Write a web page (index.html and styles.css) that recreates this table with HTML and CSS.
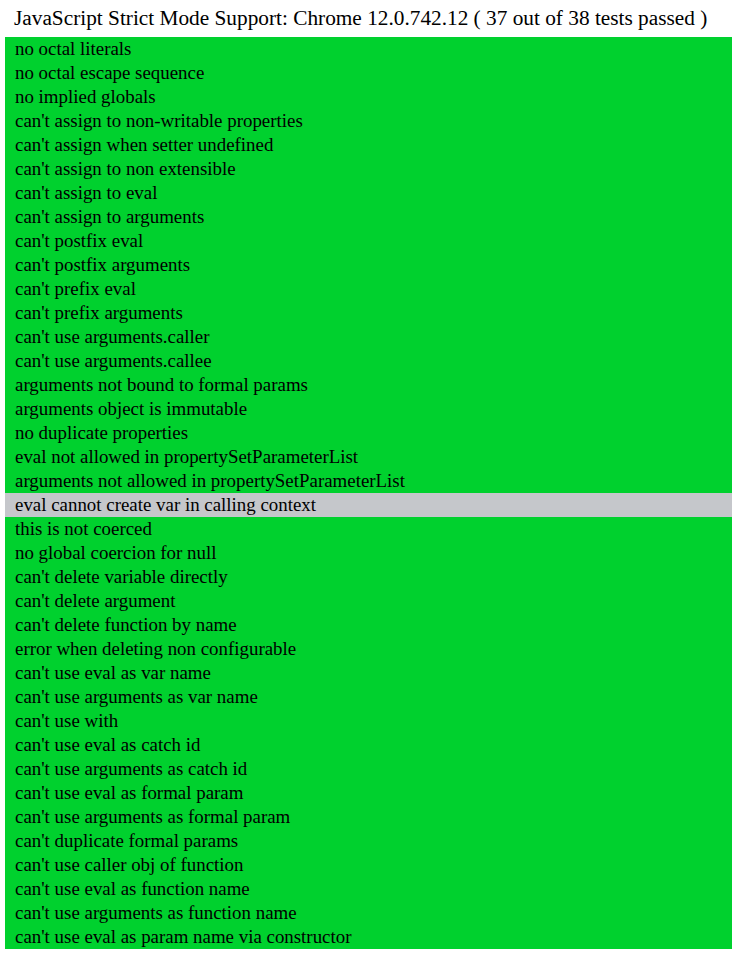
FILE: index.html
```html
<!DOCTYPE html>
<html>
<head>
<meta charset="utf-8">
<link rel="stylesheet" href="styles.css">
</head>
<body>
<h1 class="title">JavaScript Strict Mode Support: Chrome 12.0.742.12 ( 37 out of 38 tests passed )</h1>
<ul class="tests">
<li class="pass">no octal literals</li>
<li class="pass">no octal escape sequence</li>
<li class="pass">no implied globals</li>
<li class="pass">can't assign to non-writable properties</li>
<li class="pass">can't assign when setter undefined</li>
<li class="pass">can't assign to non extensible</li>
<li class="pass">can't assign to eval</li>
<li class="pass">can't assign to arguments</li>
<li class="pass">can't postfix eval</li>
<li class="pass">can't postfix arguments</li>
<li class="pass">can't prefix eval</li>
<li class="pass">can't prefix arguments</li>
<li class="pass">can't use arguments.caller</li>
<li class="pass">can't use arguments.callee</li>
<li class="pass">arguments not bound to formal params</li>
<li class="pass">arguments object is immutable</li>
<li class="pass">no duplicate properties</li>
<li class="pass">eval not allowed in propertySetParameterList</li>
<li class="pass">arguments not allowed in propertySetParameterList</li>
<li class="fail">eval cannot create var in calling context</li>
<li class="pass">this is not coerced</li>
<li class="pass">no global coercion for null</li>
<li class="pass">can't delete variable directly</li>
<li class="pass">can't delete argument</li>
<li class="pass">can't delete function by name</li>
<li class="pass">error when deleting non configurable</li>
<li class="pass">can't use eval as var name</li>
<li class="pass">can't use arguments as var name</li>
<li class="pass">can't use with</li>
<li class="pass">can't use eval as catch id</li>
<li class="pass">can't use arguments as catch id</li>
<li class="pass">can't use eval as formal param</li>
<li class="pass">can't use arguments as formal param</li>
<li class="pass">can't duplicate formal params</li>
<li class="pass">can't use caller obj of function</li>
<li class="pass">can't use eval as function name</li>
<li class="pass">can't use arguments as function name</li>
<li class="pass">can't use eval as param name via constructor</li>
</ul>
</body>
</html>
```
FILE: styles.css
```css
html, body {
  margin: 0;
  padding: 0;
  background: #fff;
}
body {
  font-family: "Liberation Serif", "Times New Roman", serif;
  color: #000;
}
.title {
  margin: 0;
  padding: 0 0 0 14px;
  font-size: 21.3px;
  font-weight: normal;
  line-height: 37px;
  height: 37px;
}
.tests {
  list-style: none;
  margin: 0 0 0 5px;
  padding: 0;
}
.tests li {
  font-size: 18.9px;
  line-height: 24px;
  height: 24px;
  padding-left: 10px;
  white-space: nowrap;
}
.pass {
  background: #00d12e;
}
.fail {
  background: #c5c7cb;
}
```
